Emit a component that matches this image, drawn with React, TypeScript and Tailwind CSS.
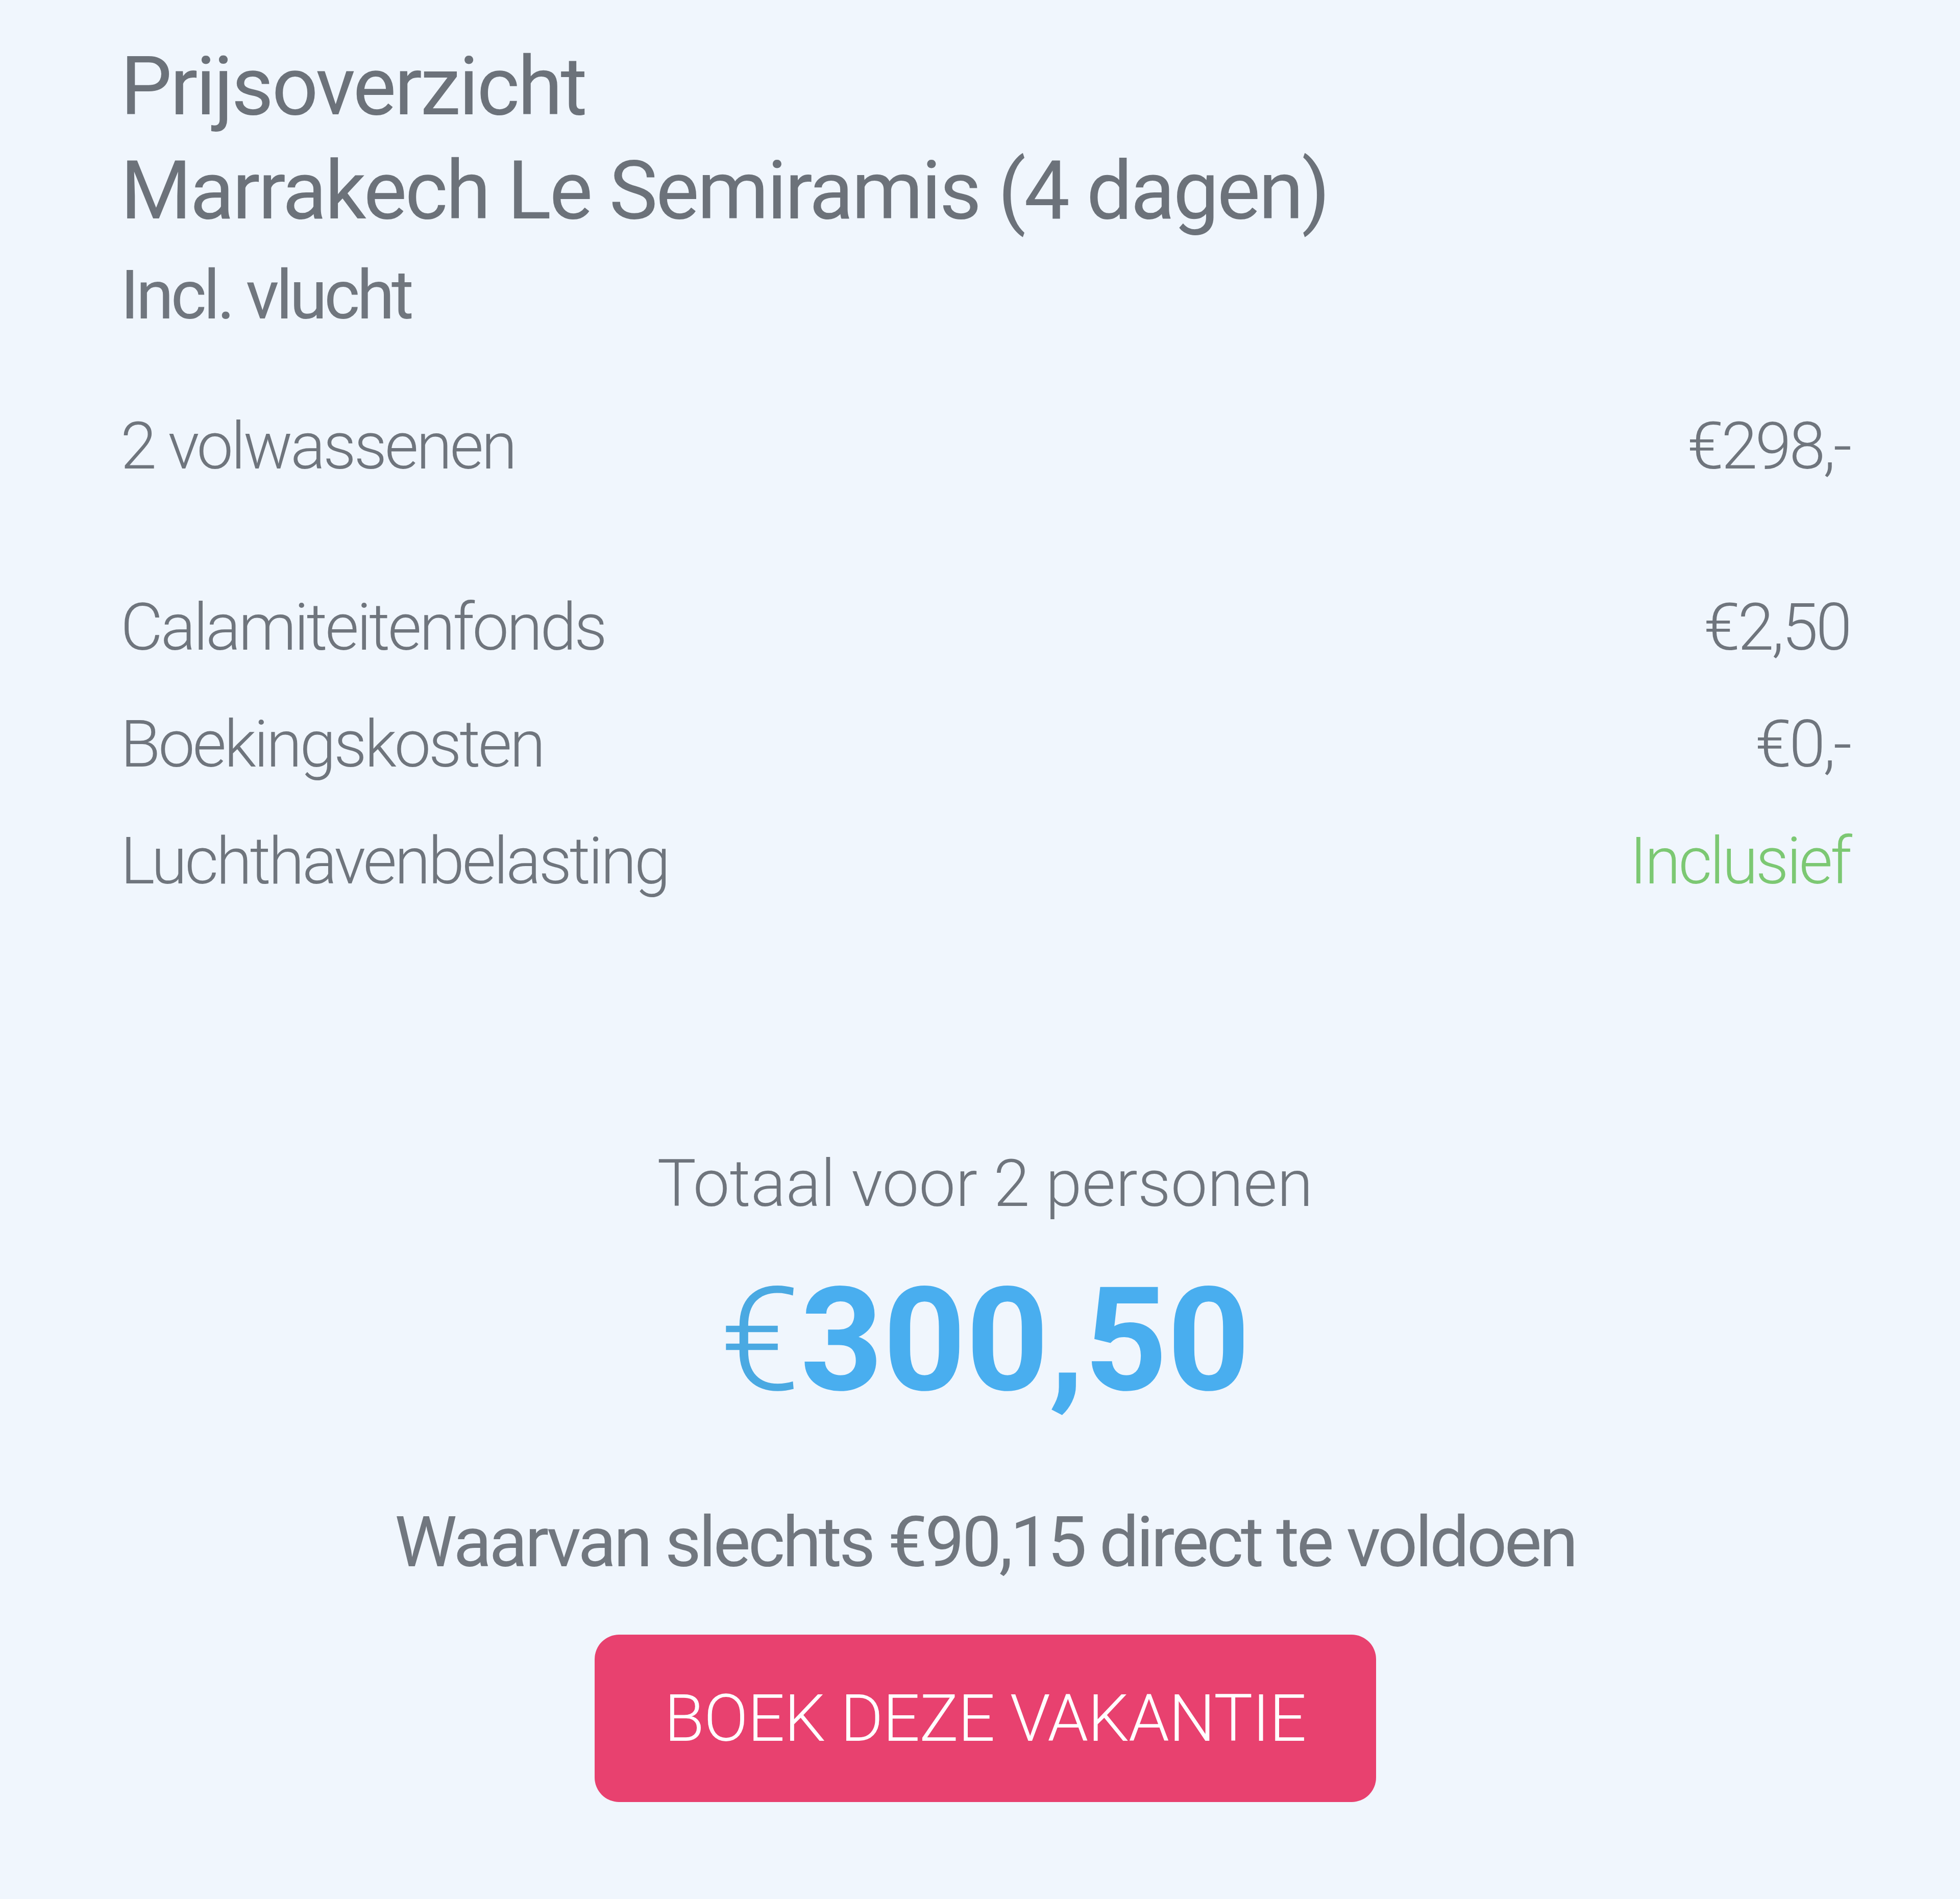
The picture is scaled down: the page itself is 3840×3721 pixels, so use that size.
import React from "react";

export default function App() {
  const font = { fontFamily: "Roboto, 'Noto Sans', sans-serif" };
  return (
    <div
      className="w-[3840px] h-[3721px] bg-[#f0f6fd] pl-[236px] pr-[216px] pt-[68px] pb-[190px] flex flex-col text-[#747a82]"
      style={font}
    >
      <h1 className="text-[160px] leading-[204px] font-normal tracking-[-3.7px] text-[#6c727a]">Prijsoverzicht</h1>
      <h2 className="text-[160px] leading-[204px] font-normal tracking-[-3.7px] text-[#6c727a]">
        Marrakech Le Semiramis (4 dagen)
      </h2>
      <div className="mt-[23px] text-[134px] leading-[160px] font-normal tracking-[-6px] text-[#70767e]">Incl. vlucht</div>

      <div className="mt-[101px] flex justify-between text-[128px] leading-[229px] font-light tracking-[-4.5px] text-[#6f757d]">
        <span>2 volwassenen</span>
        <span>€298,-</span>
      </div>

      <div className="mt-[126px] flex flex-col text-[128px] leading-[229px] font-light tracking-[-4.5px] text-[#6f757d]">
        <div className="flex justify-between">
          <span>Calamiteitenfonds</span>
          <span>€2,50</span>
        </div>
        <div className="flex justify-between">
          <span>Boekingskosten</span>
          <span>€0,-</span>
        </div>
        <div className="flex justify-between">
          <span>Luchthavenbelasting</span>
          <span className="text-[#7cc873]">Inclusief</span>
        </div>
      </div>

      <div className="mt-[437px] flex flex-col items-center">
        <div className="text-[128px] leading-[160px] font-light text-[#6f757d]">Totaal voor 2 personen</div>
        <div className="mt-[86px] text-[283px] leading-[283px] text-[#49aeef]">
          <span className="font-light text-[#4aa9e2]">€</span>
          <span className="font-bold">300,50</span>
        </div>
        <div className="mt-[174px] text-[138px] leading-[160px] font-normal tracking-[-5px] text-[#71777f]">
          Waarvan slechts €90,15 direct te voldoen
        </div>
        <button className="mt-[101px] w-[1531px] h-[328px] rounded-[48px] bg-[#e8416f] text-white text-[128px] font-light tracking-[-1px] flex items-center justify-center">
          BOEK DEZE VAKANTIE
        </button>
      </div>
    </div>
  );
}
